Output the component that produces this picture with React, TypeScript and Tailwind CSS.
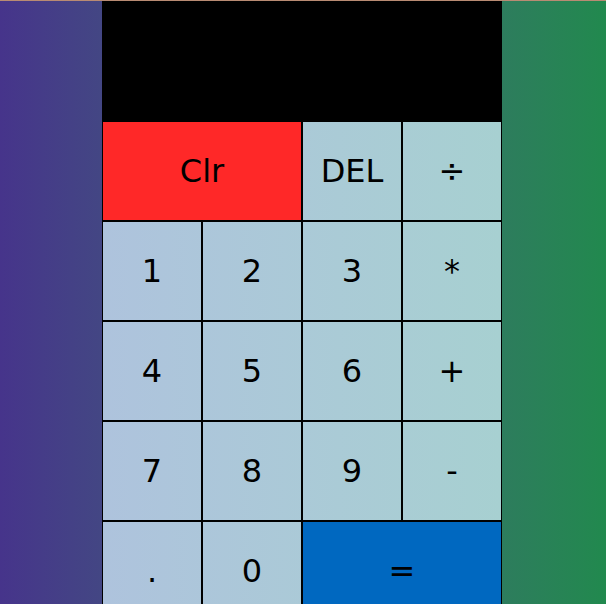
import React from 'react';

const keys: { label: string; cls?: string }[] = [
  { label: 'Clr', cls: 'col-span-2 bg-[#ff2828]' },
  { label: 'DEL' },
  { label: '÷' },
  { label: '1' },
  { label: '2' },
  { label: '3' },
  { label: '*' },
  { label: '4' },
  { label: '5' },
  { label: '6' },
  { label: '+' },
  { label: '7' },
  { label: '8' },
  { label: '9' },
  { label: '-' },
  { label: '.' },
  { label: '0' },
  { label: '=', cls: 'col-span-2 bg-[#0068c0]' },
];

const App: React.FC = () => {
  return (
    <div className="h-screen overflow-hidden border-t border-[#b98b73] bg-gradient-to-r from-[#46348b] to-[#21894e] flex justify-center pr-[2px] font-['DejaVu_Sans',sans-serif]">
      <div className="w-[400px] shrink-0">
        <div className="h-[120px] bg-black" />
        <div className="grid grid-cols-4 bg-gradient-to-r from-[#aec3dd] to-[#a7d0d1]">
          {keys.map((k) => (
            <button
              key={k.label}
              className={`h-[100px] border border-black text-[32px] text-black flex items-center justify-center ${k.cls ?? ''}`}
            >
              {k.label}
            </button>
          ))}
        </div>
      </div>
    </div>
  );
};

export default App;
